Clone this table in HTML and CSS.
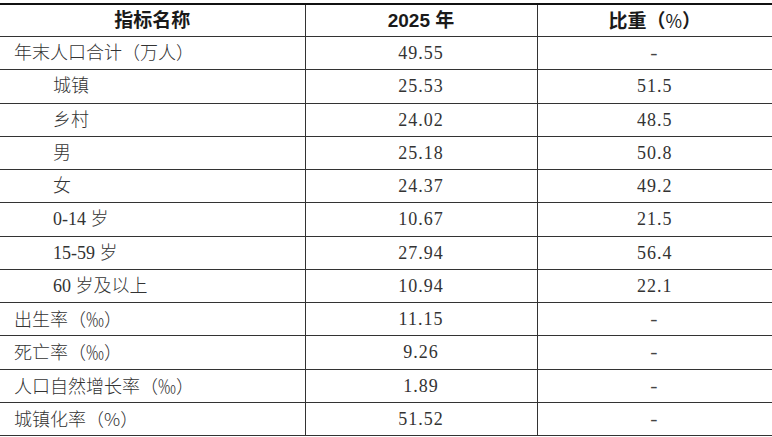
FILE: index.html
```html
<!DOCTYPE html>
<html lang="zh-CN">
<head>
<meta charset="utf-8">
<title>人口指标</title>
<link rel="stylesheet" href="styles.css">
</head>
<body>
<table class="stats">
  <colgroup>
    <col class="c1">
    <col class="c2">
    <col class="c3">
  </colgroup>
  <thead>
    <tr><th>指标名称</th><th>2025 年</th><th>比重（<span class="pct">%</span>）</th></tr>
  </thead>
  <tbody>
    <tr><td class="name">年末人口合计（万人）</td><td>49.55</td><td><span class="dash">-</span></td></tr>
    <tr><td class="name sub">城镇</td><td>25.53</td><td>51.5</td></tr>
    <tr><td class="name sub">乡村</td><td>24.02</td><td>48.5</td></tr>
    <tr><td class="name sub">男</td><td>25.18</td><td>50.8</td></tr>
    <tr><td class="name sub">女</td><td>24.37</td><td>49.2</td></tr>
    <tr><td class="name sub">0-14 岁</td><td>10.67</td><td>21.5</td></tr>
    <tr><td class="name sub">15-59 岁</td><td>27.94</td><td>56.4</td></tr>
    <tr><td class="name sub">60 岁及以上</td><td>10.94</td><td>22.1</td></tr>
    <tr><td class="name">出生率（<span class="unit">‰</span>）</td><td>11.15</td><td><span class="dash">-</span></td></tr>
    <tr><td class="name">死亡率（<span class="unit">‰</span>）</td><td>9.26</td><td><span class="dash">-</span></td></tr>
    <tr><td class="name">人口自然增长率（<span class="unit">‰</span>）</td><td>1.89</td><td><span class="dash">-</span></td></tr>
    <tr><td class="name">城镇化率（<span class="unit">%</span>）</td><td>51.52</td><td><span class="dash">-</span></td></tr>
  </tbody>
</table>
</body>
</html>
```

FILE: styles.css
```css
html, body {
  margin: 0;
  padding: 0;
  background: #ffffff;
}

body {
  padding-top: 3px;
}

.stats {
  width: 772px;
  border-collapse: collapse;
  table-layout: fixed;
  border-top: 2px solid #111111;
  font-family: "Liberation Serif", "Noto Sans CJK SC", serif;
  color: #333333;
  font-size: 18px;
}

.c1 { width: 305px; }
.c2 { width: 232px; }
.c3 { width: 235px; }

.stats th {
  height: 31px;
  padding: 0;
  font-family: "Liberation Sans", "Noto Sans CJK SC", sans-serif;
  font-weight: 700;
  font-size: 19px;
  color: #1a1a1a;
  text-align: center;
  border-bottom: 1px solid #333333;
  border-left: 1px solid #333333;
  line-height: 1;
}

.stats th .pct {
  font-family: "Noto Sans CJK SC", sans-serif;
  font-weight: 400;
  font-size: 18px;
}

.stats td {
  height: 32.25px;
  padding: 0;
  text-align: center;
  border-bottom: 1px solid #333333;
  border-left: 1px solid #333333;
  line-height: 1;
  letter-spacing: 1px;
  font-weight: 300;
}

.stats th:first-child,
.stats td:first-child {
  border-left: none;
}

.stats td.name {
  text-align: left;
  padding-left: 14px;
  letter-spacing: 0;
}

.stats td.sub {
  padding-left: 53px;
}

.unit {
  font-family: "Noto Sans CJK SC", sans-serif;
  font-size: 18px;
}

.dash {
  display: inline-block;
  transform: scaleX(1.2);
  color: #444444;
}
```
